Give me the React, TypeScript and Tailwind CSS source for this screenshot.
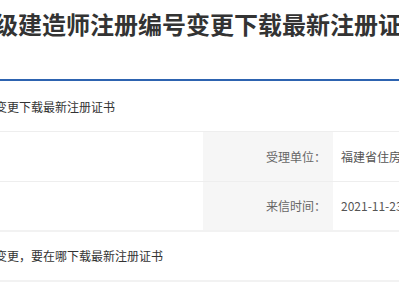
import React from "react";

export default function App() {
  const font = { fontFamily: '"Noto Sans CJK SC", "Noto Sans", sans-serif' };
  return (
    <div className="w-[399px] h-[300px] overflow-hidden bg-white" style={font}>
      <div className="h-[79px] pt-[6px]">
        <h1 className="ml-[-6px] whitespace-nowrap text-[24px] leading-[36px] font-bold text-[#333]">
          级建造师注册编号变更下载最新注册证书
        </h1>
      </div>
      <div className="h-[2px] bg-[#2d63b0]" />
      <div className="h-[51px] pt-[16px] border-b border-[#eeeeee]">
        <p className="ml-[-5px] whitespace-nowrap text-[12px] leading-[20px] text-[#333]">
          变更下载最新注册证书
        </p>
      </div>
      <div className="flex h-[50px] border-b border-[#eeeeee]">
        <div className="w-[203px] shrink-0" />
        <div className="w-[130px] shrink-0 bg-[#f6f6f6] flex items-center justify-end pr-[7px] text-[12px] text-[#666]">
          受理单位：
        </div>
        <div className="flex-1 flex items-center pl-[8px] text-[12px] text-[#555] whitespace-nowrap overflow-hidden">
          福建省住房和城乡建设厅
        </div>
      </div>
      <div className="flex h-[50px] border-b-2 border-[#f2f2f2]">
        <div className="w-[203px] shrink-0" />
        <div className="w-[130px] shrink-0 bg-[#f6f6f6] flex items-center justify-end pr-[7px] text-[12px] text-[#666]">
          来信时间：
        </div>
        <div className="flex-1 flex items-center pl-[8px] text-[12px] text-[#555] whitespace-nowrap overflow-hidden">
          2021-11-23
        </div>
      </div>
      <div className="h-[50px] flex items-center border-b-2 border-[#f2f2f2]">
        <p className="ml-[-5px] whitespace-nowrap text-[12px] leading-[20px] text-[#333]">
          变更，要在哪下载最新注册证书
        </p>
      </div>
    </div>
  );
}
